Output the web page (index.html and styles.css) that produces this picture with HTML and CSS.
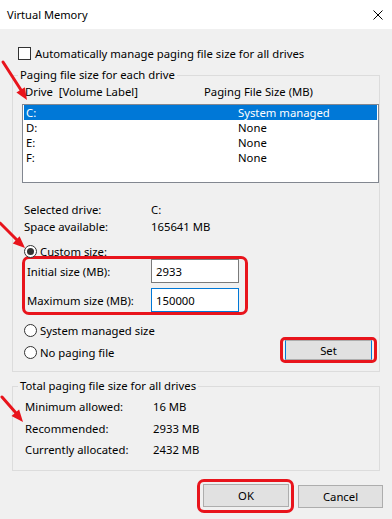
FILE: index.html
```html
<!DOCTYPE html>
<html lang="en">
<head>
<meta charset="utf-8">
<title>Virtual Memory</title>
<link rel="stylesheet" href="styles.css">
</head>
<body>
<div class="titlebar">
  <span class="title">Virtual Memory</span>
  <svg class="close" width="10" height="10" viewBox="0 0 10 10"><path d="M0.5 0.5L9.5 9.5M9.5 0.5L0.5 9.5" stroke="#000" stroke-width="1" fill="none"/></svg>
</div>
<div class="content">
  <div class="check-row"><span class="checkbox"></span><span>Automatically manage paging file size for all drives</span></div>

  <section class="group group-drives">
    <div class="legend">Paging file size for each drive</div>
    <div class="list-header"><span class="hcol">Drive&nbsp; [Volume Label]</span><span>Paging File Size (MB)</span></div>
    <div class="listbox">
      <div class="list-row selected"><span class="dcol">C:</span><span>System managed</span></div>
      <div class="list-row"><span class="dcol">D:</span><span>None</span></div>
      <div class="list-row"><span class="dcol">E:</span><span>None</span></div>
      <div class="list-row"><span class="dcol">F:</span><span>None</span></div>
    </div>
    <div class="info">
      <span>Selected drive:</span><span>C:</span>
      <span>Space available:</span><span>165641 MB</span>
    </div>
    <div class="radio-row custom"><span class="radio checked"></span><span>Custom size:</span></div>
    <div class="highlight fields">
      <div class="field"><span class="flabel">Initial size (MB):</span><input class="tbox" type="text" value="2933" readonly></div>
      <div class="field"><span class="flabel">Maximum size (MB):</span><input class="tbox focused" type="text" value="150000" readonly></div>
    </div>
    <div class="options">
      <div class="radios">
        <div class="radio-row"><span class="radio"></span><span>System managed size</span></div>
        <div class="radio-row"><span class="radio"></span><span>No paging file</span></div>
      </div>
      <div class="highlight set-wrap"><button class="btn set-btn">Set</button></div>
    </div>
  </section>

  <section class="group group-totals">
    <div class="legend">Total paging file size for all drives</div>
    <div class="totals">
      <span>Minimum allowed:</span><span>16 MB</span>
      <span>Recommended:</span><span>2933 MB</span>
      <span>Currently allocated:</span><span>2432 MB</span>
    </div>
  </section>

  <div class="actions">
    <div class="highlight ok-wrap"><button class="btn ok-btn">OK</button></div>
    <button class="btn cancel-btn">Cancel</button>
  </div>
</div>

<svg class="arrows" width="392" height="519" viewBox="0 0 392 519">
  <g stroke="#e8141c" stroke-width="3" stroke-linecap="round" fill="none">
    <path d="M3 62L21 90"/>
    <path d="M0 223L17 240"/>
    <path d="M2 397L16 413"/>
  </g>
  <g fill="#e8141c">
    <polygon points="27,100 24.8,87.2 16.4,92.6"/>
    <polygon points="25,248 19.6,236.2 12.8,243.6"/>
    <polygon points="23,422 19.1,409.6 11.5,416"/>
  </g>
</svg>
</body>
</html>
```

FILE: styles.css
```css
:root {
  --font: "Noto Sans", "Open Sans", sans-serif;
  --fs: 11.3px;
  --red: #e8141c;
}

* { box-sizing: border-box; }

body {
  margin: 0;
  width: 392px;
  height: 519px;
  background: #f0f0f0;
  font-family: var(--font);
  font-size: var(--fs);
  color: #000;
  position: relative;
  overflow: hidden;
}

.titlebar {
  height: 29px;
  background: #fff;
  display: flex;
  align-items: center;
  justify-content: space-between;
  padding: 0 9px 0 7px;
}

.title {
  font-size: 11.1px;
  line-height: 16px;
}

.close { display: block; }

.content {
  padding: 0 12px;
}

.check-row {
  display: flex;
  align-items: center;
  gap: 4px;
  height: 13px;
  margin: 18px 0 0 6px;
  line-height: 16px;
}

.checkbox {
  width: 13px;
  height: 13px;
  flex: none;
  border: 1px solid #333;
  background: #fff;
}

.group {
  border: 1px solid #dcdcdc;
}

.group-drives { margin-top: 15px; }
.group-totals { margin-top: 14px; }

.legend {
  width: max-content;
  margin: -9px 0 0 5px;
  padding: 0 2px;
  background: #f0f0f0;
  line-height: 16px;
}

.list-header {
  display: flex;
  margin: 1px 0 0 12px;
  line-height: 16px;
}

.hcol { width: 179px; white-space: pre; }

.listbox {
  margin: 4px 0 0 9px;
  height: 79px;
  border: 1px solid #828790;
  background: #fff;
  padding: 0 1px;
}

.list-row {
  display: flex;
  height: 15px;
  line-height: 15px;
  padding-left: 2px;
}

.list-row.selected {
  background: #0078d7;
  color: #fff;
}

.dcol { width: 212px; }

.info {
  margin: 18px 0 0 11px;
  display: grid;
  grid-template-columns: 127px auto;
  grid-auto-rows: 17px;
  line-height: 17px;
}

.radio-row {
  display: flex;
  align-items: center;
  gap: 3px;
  height: 13px;
  line-height: 16px;
}

.custom { margin: 10px 0 0 11px; }

.radio {
  width: 13px;
  height: 13px;
  flex: none;
  border: 1px solid #333;
  border-radius: 50%;
  background: #fff;
  display: flex;
  align-items: center;
  justify-content: center;
}

.radio.checked::after {
  content: "";
  width: 7px;
  height: 7px;
  border-radius: 50%;
  background: #333;
}

.highlight {
  border: 3px solid var(--red);
  border-radius: 7px;
}

.fields {
  margin: -2px 0 0 9px;
  width: 226px;
  padding: 0 0 0 2px;
  display: flex;
  flex-direction: column;
  gap: 5px;
}

.field {
  display: flex;
  align-items: center;
  height: 24px;
}

.flabel { width: 124px; }

.tbox {
  width: 88px;
  height: 24px;
  margin: 0;
  padding: 0 0 0 4px;
  border: 1px solid #7a7a7a;
  background: #fff;
  font-family: var(--font);
  font-size: var(--fs);
  color: #000;
  outline: none;
}

.tbox.focused { border-color: #0078d7; }

.options {
  display: flex;
  justify-content: space-between;
  align-items: flex-start;
  margin: 9px 0 8px;
}

.radios {
  display: flex;
  flex-direction: column;
  gap: 9px;
  margin-left: 11px;
}

.set-wrap {
  margin: 13px 2px 0 0;
  padding: 0 2px;
  border-radius: 5px;
}

.btn {
  display: block;
  margin: 0;
  padding: 0;
  background: #e1e1e1;
  border: 1px solid #adadad;
  font-family: var(--font);
  font-size: var(--fs);
  color: #000;
}

.set-btn {
  width: 87px;
  height: 20px;
  border-color: #adadad #0078d7;
}

.totals {
  margin: 2px 0 9.5px 12px;
  display: grid;
  grid-template-columns: 128px auto;
  grid-auto-rows: 21.5px;
  line-height: 21.5px;
}

.actions {
  display: flex;
  justify-content: flex-end;
  align-items: center;
  gap: 4px;
  margin: 8px -3px 0 0;
}

.ok-wrap {
  padding: 2px 2px 3px 3px;
}

.ok-btn { width: 86px; height: 23px; }
.cancel-btn { width: 85px; height: 23px; }

.arrows {
  position: absolute;
  left: 0;
  top: 0;
  pointer-events: none;
}
```
